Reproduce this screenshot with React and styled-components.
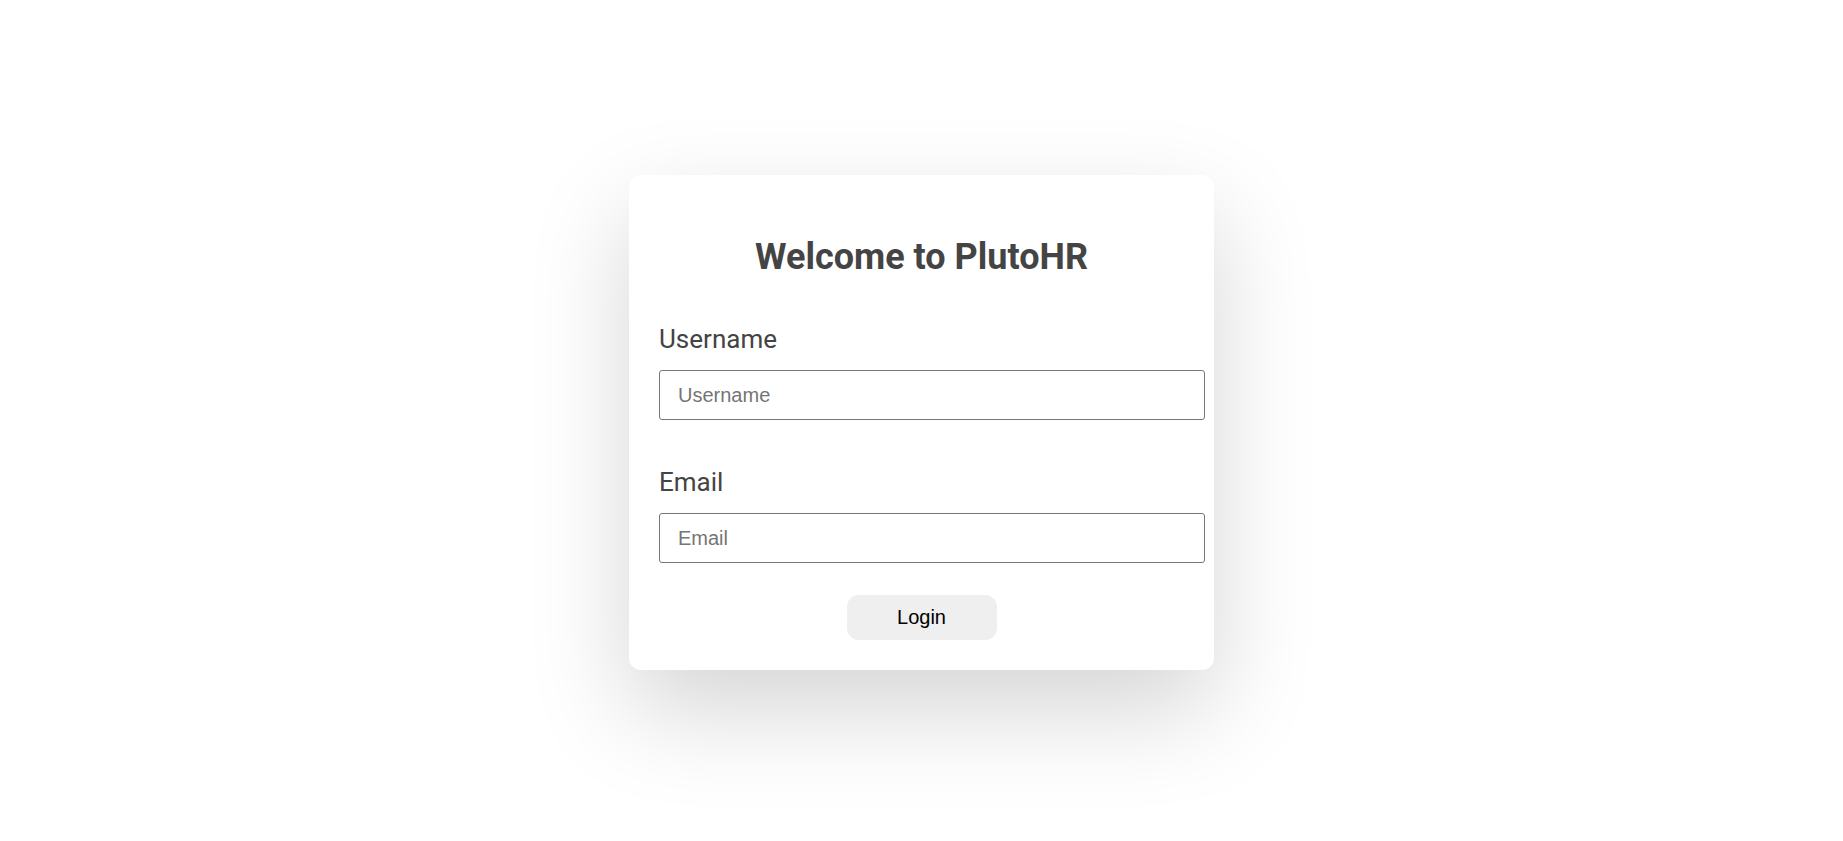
import React from "react";
import styled, { createGlobalStyle } from "styled-components";

const GlobalStyle = createGlobalStyle`
  html, body { margin: 0; padding: 0; background: #ffffff; }
  body { font-family: Roboto, "Liberation Sans", Arial, sans-serif; }
  * { box-sizing: border-box; }
`;

const Page = styled.main`
  min-height: 100vh;
  padding-top: 4px;
  display: flex;
  align-items: center;
  justify-content: center;
`;

const Card = styled.form`
  width: 585px;
  background: #ffffff;
  border-radius: 12px;
  box-shadow: 0 40px 100px rgba(0, 0, 0, 0.17);
  padding: 61px 30px 30px;
  display: flex;
  flex-direction: column;
`;

const Title = styled.h1`
  margin: 0 0 46px;
  font-family: Roboto, sans-serif;
  font-weight: 700;
  font-size: 36px;
  line-height: 42px;
  color: #444444;
  text-align: center;
`;

const Field = styled.div`
  display: flex;
  flex-direction: column;
  gap: 16px;
  margin-bottom: ${(p) => p.$mb}px;
`;

const Label = styled.label`
  font-family: Roboto, sans-serif;
  font-size: 26px;
  line-height: 30px;
  color: #444444;
`;

const Input = styled.input`
  width: calc(100% + 21px);
  height: 50px;
  padding: 0 18px;
  border: 1px solid #767676;
  border-radius: 3px;
  font-family: "Liberation Sans", Arial, sans-serif;
  font-size: 20px;
  color: #222;
  background: #fff;
  outline: none;
  &::placeholder { color: #757575; }
`;

const Button = styled.button`
  align-self: center;
  width: 150px;
  height: 45px;
  border: none;
  border-radius: 12px;
  background: #efefef;
  color: #000;
  font-family: "Liberation Sans", Arial, sans-serif;
  font-size: 20px;
  cursor: pointer;
`;

export default function App() {
  return (
    <>
      <GlobalStyle />
      <Page>
        <Card onSubmit={(e) => e.preventDefault()}>
          <Title>Welcome to PlutoHR</Title>
          <Field $mb={47}>
            <Label htmlFor="username">Username</Label>
            <Input id="username" type="text" placeholder="Username" />
          </Field>
          <Field $mb={32}>
            <Label htmlFor="email">Email</Label>
            <Input id="email" type="email" placeholder="Email" />
          </Field>
          <Button type="submit">Login</Button>
        </Card>
      </Page>
    </>
  );
}
